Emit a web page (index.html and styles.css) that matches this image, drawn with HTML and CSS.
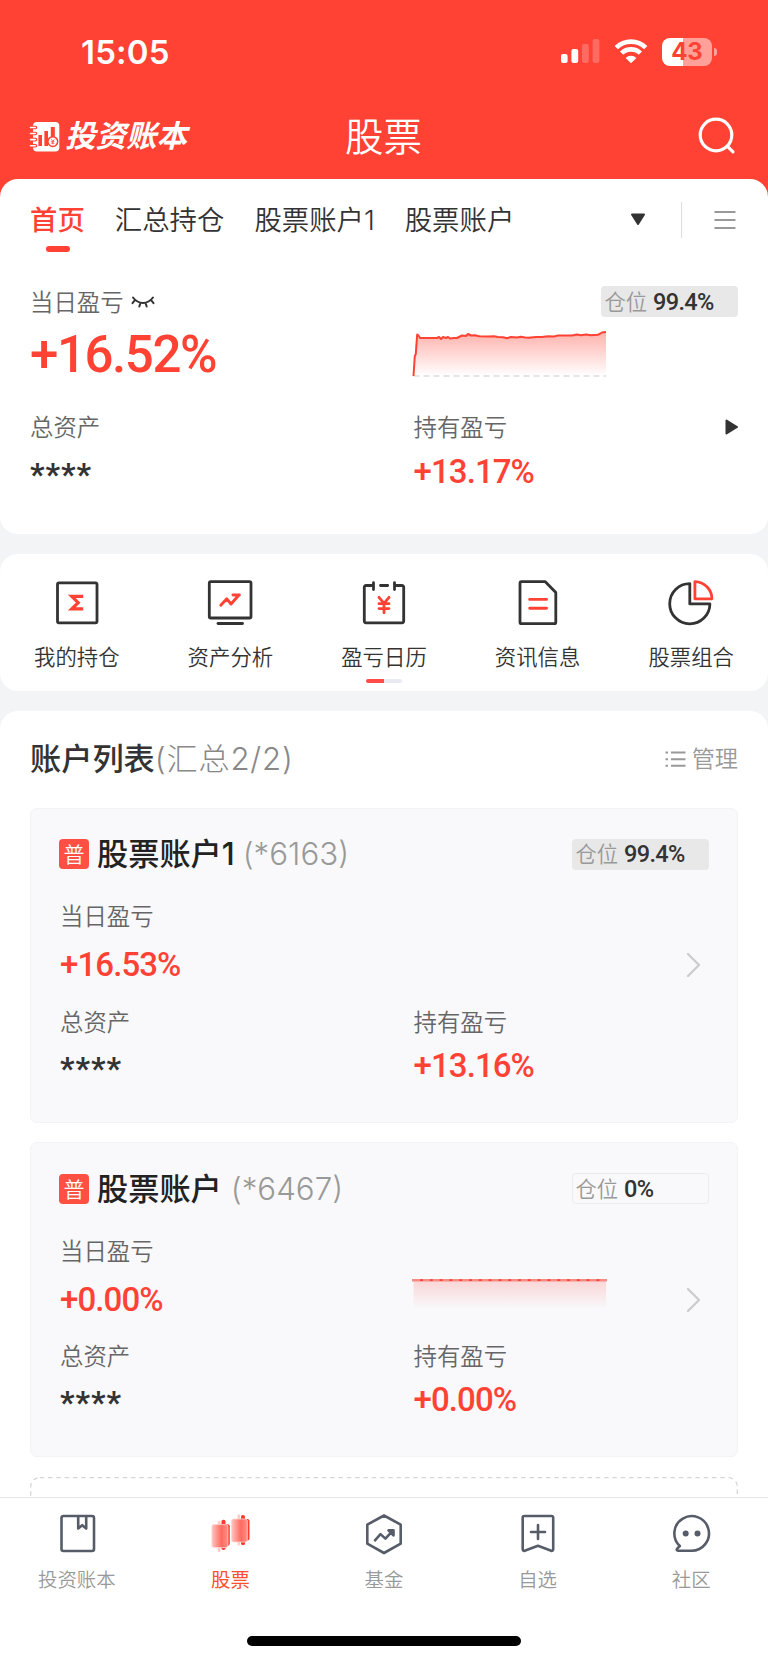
FILE: index.html
```html
<!DOCTYPE html>
<html lang="zh-CN">
  <head>
    <meta charset="UTF-8" />
    <meta name="viewport" content="width=device-width, initial-scale=1.0" />
    <title>投资账本 - 股票</title>
    <link rel="stylesheet" href="styles.css">
  </head>
  <body>
    <div class="page">
      <header class="header">
        <div class="status-bar">
          <span class="time">15:05</span>
          <div class="status-icons">
            <svg class="signal" width="39" height="25" viewBox="0 0 39 25" fill="#fff">
              <rect x="0" y="15" width="6.6" height="9" rx="2" />
              <rect x="10.4" y="10" width="6.8" height="14" rx="2" />
              <rect x="21" y="5" width="6.8" height="19" rx="2" opacity=".22" />
              <rect x="31.6" y="0" width="6.8" height="24" rx="2" opacity=".22" />
            </svg>
            <svg class="wifi" width="34" height="25" viewBox="0 0 34 25">
              <g fill="none" stroke="#fff" stroke-width="4.6">
                <path d="M2.3 8.6a21 21 0 0 1 29.4 0" />
                <path d="M7.6 14.2a13.5 13.5 0 0 1 18.8 0" />
              </g>
              <path d="M17 24.2l-5.4-5.3a8 8 0 0 1 10.8 0z" fill="#fff" />
            </svg>
            <div class="battery"><span>43</span></div>
          </div>
        </div>
        <div class="nav-bar">
          <div class="brand">
            <svg width="32" height="32" viewBox="0 0 32 32">
              <rect x="4" y="1" width="26.3" height="29.6" rx="4" fill="#fff" />
              <path d="M4 6.5h2.5M4 12.5h2.5M4 18.6h2.5M4 24.7h2.5" stroke="#ff4234" stroke-width="3.6" stroke-linecap="round" />
              <path d="M1.5 6.5h4.7M1.5 12.5h4.7M1.5 18.6h4.7M1.5 24.7h4.7" stroke="#fff" stroke-width="1.6" stroke-linecap="round" />
              <g fill="#ff4234">
                <rect x="9.4" y="14" width="3.6" height="11" />
                <rect x="15.4" y="10" width="3.6" height="15" />
                <rect x="21.8" y="6" width="4" height="10" />
              </g>
              <circle cx="23.8" cy="20.6" r="4.9" fill="#fff" stroke="#ff4234" stroke-width="1.5" />
              <path d="M22.3 18.3l1.5 2 1.5-2M23.8 20.3v3M22.2 20.6h3.2M22.2 22.2h3.2" fill="none" stroke="#ff4234" stroke-width=".8" />
            </svg>
            <span>投资账本</span>
          </div>
          <h1>股票</h1>
          <svg class="search" width="40" height="40" viewBox="0 0 40 40" fill="none" stroke="#fff" stroke-width="3.2" stroke-linecap="round">
            <circle cx="18" cy="18" r="15.8" />
            <path d="M29.2 29.2l5.8 5.6" />
          </svg>
        </div>
      </header>

      <main class="content">
        <section class="panel summary">
          <div class="tabs">
            <span class="tab active">首页</span>
            <span class="tab">汇总持仓</span>
            <span class="tab">股票账户1</span>
            <span class="tab">股票账户</span>
            <div class="tabs-right">
              <svg width="16" height="13" viewBox="0 0 16 13"><path d="M2 1.5h12L8 11z" fill="#333" stroke="#333" stroke-width="2" stroke-linejoin="round" /></svg>
              <i class="divider"></i>
              <svg width="22" height="20" viewBox="0 0 22 20" stroke="#999" stroke-width="2"><path d="M.5 2h21M.5 10h21M.5 18h21" /></svg>
            </div>
          </div>
          <div class="row top-row">
            <span class="label">当日盈亏
              <svg class="eye" width="24" height="13" viewBox="0 0 24 13" fill="none" stroke="#333" stroke-width="2" stroke-linecap="round">
                <path d="M2 2.5c5.5 7.2 14.5 7.2 20 0M4 5L1.5 8.2M9.5 8L8.3 11.5M14.5 8l1.2 3.5M20 5l2.5 3.2" />
              </svg>
            </span>
            <span class="position"><em>仓位</em><b>99.4%</b></span>
          </div>
          <div class="cols big-row">
            <span class="num big">+16.52%</span>
            <svg class="chart" width="196" height="50" viewBox="0 0 196 50">
              <defs>
                <linearGradient id="fade" x1="0" y1="0" x2="0" y2="1">
                  <stop offset="0" stop-color="#ff4234" stop-opacity=".42" />
                  <stop offset="1" stop-color="#ff4234" stop-opacity="0" />
                </linearGradient>
              </defs>
              <path d="M1.5 46L4 8L22 8L40 8L52 5L56 4L70 6L96 7L130 6.5L160 5L186 4L194 1V46z" fill="url(#fade)" />
              <path d="M1.5 46H194" stroke="#ddd" stroke-width="1.7" stroke-dasharray="6 4" />
              <path d="M1.5 46L2.8 26L3.8 24L5.2 4.5L6.5 5.5L8 8H25L27 7L29 9L31 7L34 8L36 7L38 8.5L42 8L45 8L50 5.5L54 6L56 4L59 5.5L63 5.3L67 6.2L76 6.4L82 6.2L86 7L91 7.2L95 8.2L99 7L105 7.6L109 6.8L113 7.5L117 7.8L124 7L130 7L136 6.2L142 6.5L146 5.5L160 5.6L165 4.6L169 5.2L174 4.6L179 5.2L186 4.8L190 2.5L194 2" fill="none" stroke="#ff4234" stroke-width="2" stroke-linejoin="round" />
            </svg>
          </div>
          <div class="cols label-row">
            <span class="label">总资产</span>
            <span class="label">持有盈亏</span>
            <svg class="play" width="13" height="16" viewBox="0 0 13 16"><path d="M1.5 1.5L12 8L1.5 14.5z" fill="#333" stroke="#333" stroke-width="2" stroke-linejoin="round" /></svg>
          </div>
          <div class="cols value-row">
            <span class="num stars">****</span>
            <span class="num">+13.17%</span>
          </div>
        </section>

        <section class="panel menu">
          <div class="menu-grid">
            <div class="menu-item">
              <svg width="48" height="48" viewBox="0 0 48 48" fill="none" stroke="#333" stroke-width="2.8" stroke-linejoin="round">
                <rect x="4.5" y="4.8" width="39.5" height="40" rx="1.5" />
                <path d="M30.2 18.4H18.8l6.4 6.3-6.4 6.2h11.4" stroke="#ff4234" stroke-width="3.2" stroke-linejoin="miter" />
              </svg>
              <span>我的持仓</span>
            </div>
            <div class="menu-item">
              <svg width="48" height="48" viewBox="0 0 48 48" fill="none" stroke="#333" stroke-width="2.8" stroke-linecap="round" stroke-linejoin="round">
                <rect x="3.3" y="3.7" width="41.7" height="36.3" rx="1.5" />
                <path d="M12 45.5h24.5" />
                <path d="M14.8 27.2l6-6.4 4.2 5.2 8-9M27 17h6.4" stroke="#ff4234" stroke-width="2.9" />
              </svg>
              <span>资产分析</span>
            </div>
            <div class="menu-item">
              <svg width="48" height="48" viewBox="0 0 48 48" fill="none" stroke="#333" stroke-width="2.8" stroke-linecap="round" stroke-linejoin="round">
                <path d="M13 7.5H6a1.7 1.7 0 0 0-1.7 1.7v33.9a1.7 1.7 0 0 0 1.7 1.7h36a1.7 1.7 0 0 0 1.7-1.7V9.2A1.7 1.7 0 0 0 42 7.5h-7M13.5 4.7v6.8M34.5 4.7v6.8M20.5 7.5h7.2" />
                <path d="M19 19.3l5 6 5-6M24 25.5v9.3M19 25.7h10M19 30.6h10" stroke="#ff4234" />
              </svg>
              <span>盈亏日历</span>
            </div>
            <div class="menu-item">
              <svg width="48" height="48" viewBox="0 0 48 48" fill="none" stroke="#333" stroke-width="2.8" stroke-linecap="round" stroke-linejoin="round">
                <path d="M7.5 3.7h23.8l10.5 10.8v29.7a1.5 1.5 0 0 1-1.5 1.5H7.5A1.5 1.5 0 0 1 6 44.2v-39a1.5 1.5 0 0 1 1.5-1.5z" />
                <path d="M15.7 21.4h16.8M15.7 30.2h16.8" stroke="#ff4234" stroke-width="2.9" />
              </svg>
              <span>资讯信息</span>
            </div>
            <div class="menu-item">
              <svg width="48" height="48" viewBox="0 0 48 48" fill="none" stroke="#333" stroke-width="2.8" stroke-linejoin="round">
                <path d="M22.8 5.6a20.1 20.1 0 1 0 20.1 20.3H22.8z" />
                <path d="M27.9 3.6v17.2h17A17.2 17.2 0 0 0 27.9 3.6z" stroke="#ff4234" />
              </svg>
              <span>股票组合</span>
            </div>
          </div>
          <div class="pager"></div>
        </section>

        <section class="panel accounts">
          <div class="accounts-head">
            <h2>账户列表<span>(汇总2/2)</span></h2>
            <div class="manage">
              <svg width="21" height="19" viewBox="0 0 21 19" stroke="#999" stroke-width="2"><path d="M.5 2.5H3M.5 9.2H3M.5 15.8H3M6 2.5h14.5M6 9.2h14.5M6 15.8h14.5" /></svg>
              <span>管理</span>
            </div>
          </div>

          <div class="card">
            <div class="card-head">
              <i class="type">普</i>
              <strong>股票账户1</strong>
              <span class="code">(*6163)</span>
              <span class="position"><em>仓位</em><b>99.4%</b></span>
            </div>
            <div class="label today">当日盈亏</div>
            <div class="cols today-row">
              <span class="num">+16.53%</span>
              <svg class="arrow" width="15" height="26" viewBox="0 0 15 26"><path d="M2 2l11 11L2 24" fill="none" stroke="#ccc" stroke-width="2.3" stroke-linecap="round" stroke-linejoin="round" /></svg>
            </div>
            <div class="cols label-row">
              <span class="label">总资产</span>
              <span class="label">持有盈亏</span>
            </div>
            <div class="cols value-row">
              <span class="num stars">****</span>
              <span class="num">+13.16%</span>
            </div>
          </div>

          <div class="card">
            <div class="card-head">
              <i class="type">普</i>
              <strong>股票账户</strong>
              <span class="code wide">(*6467)</span>
              <span class="position empty"><em>仓位</em><b>0%</b></span>
            </div>
            <div class="label today">当日盈亏</div>
            <div class="cols today-row">
              <span class="num">+0.00%</span>
              <svg class="chart flat" width="196" height="40" viewBox="0 0 196 40">
                <path d="M1.5 8H194V36H1.5z" fill="url(#fade)" opacity=".45" />
                <path d="M0 7.2H195" stroke="#f58d86" stroke-width="2.4" />
                <path d="M8 7.2H193" stroke="#ff4234" stroke-width="1.8" stroke-dasharray="3 6.8" />
              </svg>
              <svg class="arrow" width="15" height="26" viewBox="0 0 15 26"><path d="M2 2l11 11L2 24" fill="none" stroke="#ccc" stroke-width="2.3" stroke-linecap="round" stroke-linejoin="round" /></svg>
            </div>
            <div class="cols label-row">
              <span class="label">总资产</span>
              <span class="label">持有盈亏</span>
            </div>
            <div class="cols value-row">
              <span class="num stars">****</span>
              <span class="num">+0.00%</span>
            </div>
          </div>

          <svg class="add-card" width="708" height="120" viewBox="0 0 708 120">
            <rect x=".7" y=".7" width="706.6" height="118" rx="9" fill="none" stroke="#d6d6d6" stroke-width="1.3" stroke-dasharray="4.5 3.8" />
          </svg>
        </section>
      </main>

      <footer class="tab-bar">
        <div class="tab-items">
          <div class="tab-item">
            <svg width="48" height="48" viewBox="0 0 48 48" fill="none" stroke="#565c68" stroke-width="2.6" stroke-linejoin="round">
              <rect x="8.5" y="6" width="32.5" height="35" rx="2" />
              <path d="M25.2 6v12.5l4-3.3 4 3.3V6" />
            </svg>
            <span>投资账本</span>
          </div>
          <div class="tab-item current">
            <svg width="48" height="48" viewBox="0 0 48 48">
              <defs>
                <linearGradient id="candle" x1="0" y1="0" x2="1" y2="0">
                  <stop offset="0" stop-color="#ffc4bf" />
                  <stop offset=".6" stop-color="#ff6b61" />
                  <stop offset="1" stop-color="#ff8f87" />
                </linearGradient>
              </defs>
              <g fill="#ff3b2f">
                <rect x="15.5" y="9.8" width="4" height="30.2" rx="1.8" />
                <rect x="12" y="14.2" width="11.8" height="21.6" rx="2" />
                <rect x="35" y="5" width="4" height="30.2" rx="1.8" />
                <rect x="31.5" y="9" width="12" height="21.4" rx="2" />
              </g>
              <g fill="#ffc9c4">
                <rect x="11.8" y="11" width="2.6" height="31" rx="1" />
                <rect x="31.5" y="4.5" width="2.6" height="31" rx="1" />
              </g>
              <g fill="url(#candle)" stroke="#ffd6d2" stroke-width=".8">
                <rect x="5.9" y="14.6" width="16" height="23" rx="2" />
                <rect x="25.5" y="9" width="15.8" height="23" rx="2" />
              </g>
            </svg>
            <span>股票</span>
          </div>
          <div class="tab-item">
            <svg width="48" height="48" viewBox="0 0 48 48" fill="none" stroke="#565c68" stroke-width="2.6" stroke-linecap="round" stroke-linejoin="round">
              <path d="M24 5.5l16.7 9.2v19L24 43 7.3 33.7v-19z" />
              <path d="M15 30.3l5.5-6.2 4.9 4.5 7-7.5M28.5 20.4h5v5z" />
            </svg>
            <span>基金</span>
          </div>
          <div class="tab-item">
            <svg width="48" height="48" viewBox="0 0 48 48" fill="none" stroke="#565c68" stroke-width="2.6" stroke-linecap="round" stroke-linejoin="round">
              <path d="M10.2 6h27.5a1.5 1.5 0 0 1 1.5 1.5V39.5a1.5 1.5 0 0 1-2 1.3L24 35.8l-13.3 5a1.5 1.5 0 0 1-2-1.3V7.5A1.5 1.5 0 0 1 10.2 6zM17 22h14M24 15v14" />
            </svg>
            <span>自选</span>
          </div>
          <div class="tab-item">
            <svg width="48" height="48" viewBox="0 0 48 48" fill="none" stroke="#565c68" stroke-width="2.6" stroke-linecap="round" stroke-linejoin="round">
              <path d="M24.3 40.7A17.3 17.3 0 1 0 12.8 36l-2.6 2.6c-.9 1-.4 2.1.8 2.1z" />
              <g fill="#565c68" stroke="none"><circle cx="18.7" cy="23.4" r="3" /><circle cx="30.5" cy="23.4" r="3" /></g>
            </svg>
            <span>社区</span>
          </div>
        </div>
        <div class="home-indicator"></div>
      </footer>
    </div>
  </body>
</html>
```

FILE: styles.css
```css
* {
  box-sizing: border-box;
}
body {
  margin: 0;
  font-family: "Noto Sans CJK SC", sans-serif;
  font-weight: 350;
  color: #333;
  background: #f3f4f6;
}
h1, h2 {
  margin: 0;
}
i, em {
  font-style: normal;
}
svg {
  display: block;
  flex: none;
}
.page {
  display: flex;
  flex-direction: column;
  width: 768px;
  height: 1663px;
  overflow: hidden;
}

/* header */
.header {
  flex: none;
  height: 199px;
  background: #ff4234;
  color: #fff;
}
.status-bar {
  display: flex;
  justify-content: space-between;
  align-items: center;
  height: 103px;
  padding: 0 51px 0 81px;
}
.time {
  font: 600 33px/40px Inter, sans-serif;
  letter-spacing: 0.2px;
}
.status-icons {
  display: flex;
  align-items: center;
}
.wifi {
  margin: 0 14px 0 14px;
}
.battery {
  position: relative;
  width: 50px;
  height: 28px;
  margin-right: 5px;
  border-radius: 8px;
  background: linear-gradient(90deg, #fff 43%, #ffa099 43%);
  color: #ff4234;
  font: 700 24px/28px Inter, sans-serif;
  text-align: center;
}
.battery::after {
  content: "";
  position: absolute;
  right: -5px;
  top: 10px;
  width: 3px;
  height: 8px;
  border-radius: 0 3px 3px 0;
  background: #ffa099;
}
.nav-bar {
  display: grid;
  grid-template-columns: 1fr auto 1fr;
  align-items: center;
  height: 68px;
  padding: 0 30px 0 29px;
}
.brand {
  display: flex;
  align-items: center;
  gap: 4px;
}
.brand span {
  font-size: 30.5px;
  font-weight: 700;
  font-style: italic;
  line-height: 36px;
  padding-bottom: 7px;
}
.nav-bar h1 {
  font-size: 38.5px;
  font-weight: 350;
  line-height: 44px;
  padding-bottom: 7px;
}
.search {
  justify-self: end;
}

/* panels */
.content {
  flex: 1;
  min-height: 0;
  margin-top: -20px;
  overflow: hidden;
}
.panel {
  background: #fff;
  border-radius: 18px;
}
.row {
  display: flex;
  align-items: center;
  justify-content: space-between;
}
.cols {
  display: grid;
  grid-template-columns: 353.5px 1fr auto;
  align-items: center;
}
.label {
  display: flex;
  align-items: center;
  font-size: 23.4px;
  line-height: 34px;
  color: #666;
}
.num {
  font: 500 33px/36px Roboto, sans-serif;
  letter-spacing: -0.9px;
  color: #ff4234;
}
.stars {
  padding-top: 4px;
  font-size: 32px;
  font-weight: 700;
  line-height: 30px;
  letter-spacing: 1px;
  color: #333;
}
.value-row {
  height: 36px;
}
.position {
  display: flex;
  align-items: center;
  width: 137.5px;
  height: 31px;
  padding-left: 4px;
  border-radius: 4px;
  background: #e8e8e8;
}
.position em {
  font-size: 21.3px;
  line-height: 28px;
  padding-bottom: 2px;
  color: #999;
}
.position b {
  margin-left: 6px;
  font: 500 23.5px/28px Roboto, sans-serif;
  letter-spacing: -0.7px;
  color: #333;
}
.position.empty {
  padding-left: 3px;
  background: none;
  border: 1px solid #ececee;
}

/* summary */
.summary {
  height: 355px;
  padding: 0 30px;
}
.summary .cols {
  grid-template-columns: 383.5px 1fr auto;
}
.tabs {
  display: flex;
  align-items: center;
  gap: 30px;
  height: 78px;
}
.tab {
  position: relative;
  padding-top: 4px;
  font-family: Inter, "Noto Sans CJK SC", sans-serif;
  font-size: 27.4px;
  line-height: 40px;
}
.tab.active {
  color: #ff4234;
  font-weight: 500;
}
.tab.active::after {
  content: "";
  position: absolute;
  left: 15.5px;
  bottom: -12px;
  width: 24px;
  height: 6px;
  border-radius: 3px;
  background: #ff4234;
}
.tabs-right {
  display: flex;
  align-items: center;
  margin-left: auto;
  padding: 3px 2px 0 0;
}
.divider {
  width: 1px;
  height: 36px;
  margin: 0 32px 0 35px;
  background: #ddd;
}
.top-row {
  height: 31px;
  margin-top: 29px;
}
.top-row .label {
  padding-bottom: 2px;
}
.eye {
  margin: 2px 0 0 7px;
}
.big-row {
  height: 71px;
}
.big {
  padding-top: 4px;
  font-size: 51px;
  line-height: 60px;
  letter-spacing: -1.4px;
}
.big-row .chart {
  margin: 5px 0 0 -2px;
}
.summary .label-row {
  margin-top: 21px;
}
.play {
  margin-top: 2px;
}
.summary .value-row {
  margin-top: 10.5px;
}

/* shortcuts */
.menu {
  height: 137px;
  margin-top: 20px;
  padding-top: 24px;
}
.menu-grid, .tab-items {
  display: grid;
  grid-template-columns: repeat(5, 1fr);
}
.menu-item, .tab-item {
  display: flex;
  flex-direction: column;
  align-items: center;
}
.menu-item span {
  margin-top: 15px;
  font-size: 21.4px;
  line-height: 30px;
}
.pager {
  width: 36px;
  height: 4px;
  margin: 8px auto 0;
  border-radius: 2px;
  background: linear-gradient(90deg, #ff4a4a 50%, #e8eaf2 50%);
}

/* accounts */
.accounts {
  margin-top: 20px;
  padding: 0 30px;
  border-radius: 18px 18px 0 0;
}
.accounts-head {
  display: flex;
  justify-content: space-between;
  align-items: center;
  height: 96.5px;
}
.accounts-head h2 {
  padding-bottom: 2px;
  font-size: 31.2px;
  font-weight: 500;
  line-height: 40px;
}
.accounts-head h2 span {
  font-family: Inter, "Noto Sans CJK SC", sans-serif;
  font-weight: 300;
  letter-spacing: 0.8px;
  color: #888;
}
.manage {
  display: flex;
  align-items: center;
  gap: 6px;
  font-size: 23.2px;
  line-height: 34px;
  color: #999;
}
.manage span {
  padding-bottom: 4px;
}
.card {
  height: 315px;
  margin-bottom: 19.5px;
  padding: 30px 29px 0;
  border: 1px solid #f3f3f5;
  border-radius: 7px;
  background: #f9f9fc;
}
.card-head {
  display: flex;
  align-items: center;
  height: 31px;
}
.type {
  width: 30px;
  height: 30px;
  margin-left: -1px;
  border-radius: 4px;
  background: #ff5043;
  color: #fff;
  font-size: 21px;
  line-height: 28px;
  text-align: center;
}
.card-head strong {
  margin-left: 8px;
  font-family: Inter, "Noto Sans CJK SC", sans-serif;
  font-size: 31.2px;
  font-weight: 500;
  line-height: 40px;
  color: #222;
}
.code {
  margin-left: 8px;
  font: 300 31.3px/40px Inter, sans-serif;
  color: #999;
}
.code.wide {
  margin-left: 9px;
}
.card-head .position {
  margin-left: auto;
  margin-right: -1px;
}
.today {
  margin-top: 28.5px;
}
.today-row {
  height: 36px;
  margin-top: 15px;
}
.arrow {
  grid-column: 3;
  margin-right: 7px;
}
.flat {
  align-self: start;
  margin: -9px 0 0 -2px;
}
.card .label-row {
  margin-top: 20.5px;
}
.card .value-row {
  margin-top: 10px;
}

/* bottom tab bar */
.tab-bar {
  flex: none;
  height: 166px;
  padding-top: 12px;
  border-top: 1px solid #e6e6e6;
  background: #fff;
}
.tab-item span {
  margin-top: 8px;
  font-size: 19.4px;
  line-height: 26px;
  color: #999;
}
.tab-item.current span {
  color: #ff5030;
  font-weight: 400;
}
.home-indicator {
  width: 274px;
  height: 10px;
  margin: 44px auto 0;
  border-radius: 5px;
  background: #000;
}
```
